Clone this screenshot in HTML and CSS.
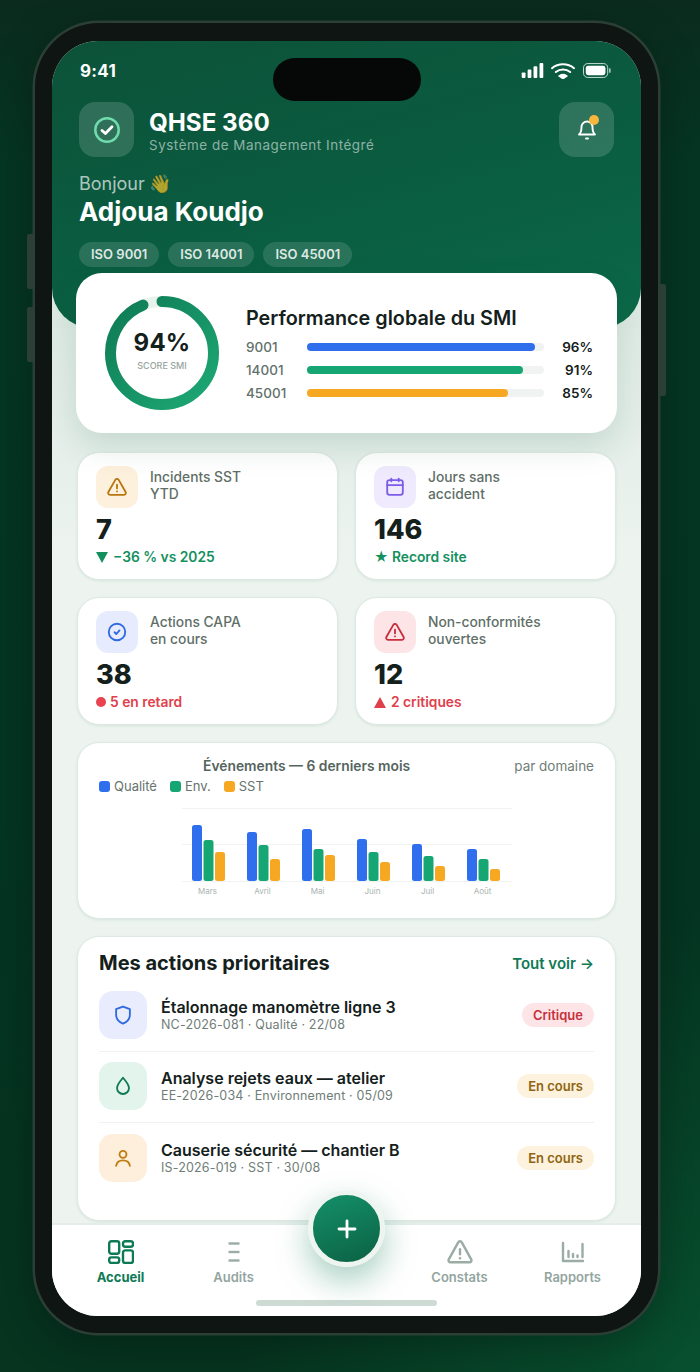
FILE: index.html
```html
<!DOCTYPE html>
<html lang="fr">
<head>
<meta charset="utf-8">
<title>QHSE 360</title>
<link rel="stylesheet" href="styles.css">
</head>
<body>
<div class="phone">
  <span class="side side-a"></span>
  <span class="side side-b"></span>
  <span class="side side-c"></span>
  <div class="screen">
    <span class="island"></span>
    <header class="hero">
      <div class="status">
        <span class="time">9:41</span>
        <div class="status-icons">
          <svg class="ic-signal" viewBox="0 0 23 16"><rect x="0" y="10" width="4" height="6" rx="1"/><rect x="6.3" y="7" width="4" height="9" rx="1"/><rect x="12.6" y="3.5" width="4" height="12.5" rx="1"/><rect x="19" y="0" width="4" height="16" rx="1"/></svg>
          <svg class="ic-wifi" viewBox="0 0 24 17" fill="none" stroke="#fff" stroke-width="2" stroke-linecap="round"><path d="M1 6.200C7.300.9 16.700.9 23 6.200"/><path d="M4.800 10C9 6.600 15 6.600 19.200 10"/><path d="M8.600 14c2-1.400 4.800-1.400 6.800 0L12 16.400z" fill="#fff"/></svg>
          <svg class="ic-batt" viewBox="0 0 30 16"><rect x=".6" y=".6" width="25.800" height="14.800" rx="4.400" fill="none" stroke="#cfe3da" stroke-width="1"/><rect x="3" y="3" width="21" height="10" rx="2.600" fill="#fff"/><rect x="28" y="5.500" width="1.400" height="5" rx=".7" fill="#cfe3da"/></svg>
        </div>
      </div>
      <div class="brand">
        <div class="glass-btn">
          <svg class="ic-26" viewBox="0 0 26 26" fill="none" stroke-linecap="round" stroke-linejoin="round"><circle cx="13" cy="13" r="11.700" stroke="#6fdcae" stroke-width="2.500"/><path d="M8 13.400l3.400 3.200L18 9.800" stroke="#fff" stroke-width="2.800"/></svg>
        </div>
        <div class="brand-text">
          <div class="brand-name">QHSE 360</div>
          <div class="brand-sub">Système de Management Intégré</div>
        </div>
        <div class="glass-btn bell">
          <svg class="ic-24" viewBox="0 0 24 24" fill="none" stroke="#fff" stroke-width="1.900" stroke-linecap="round" stroke-linejoin="round"><path d="M6.500 9a5.500 5.500 0 0 1 11 0c0 5.500 2.500 7.500 2.500 7.500H4S6.500 14.500 6.500 9"/><path d="M11 20.500h2"/></svg>
          <span class="bell-dot"></span>
        </div>
      </div>
      <div class="hello">Bonjour 👋</div>
      <div class="user">Adjoua Koudjo</div>
      <div class="chips">
        <span class="chip">ISO 9001</span>
        <span class="chip">ISO 14001</span>
        <span class="chip">ISO 45001</span>
      </div>
    </header>

    <main class="content">
      <section class="score">
        <div class="ring">
          <svg viewBox="0 0 114 114" class="ring-svg">
            <defs><linearGradient id="rg" x1="1" y1="0" x2="0" y2="1"><stop offset="0" stop-color="#0e7a55"/><stop offset="1" stop-color="#1ea975"/></linearGradient></defs>
            <circle cx="57" cy="57" r="51.500" fill="none" stroke="#e8f3ee" stroke-width="11"/>
            <circle class="ring-arc" cx="57" cy="57" r="51.500" fill="none" stroke="url(#rg)" stroke-width="11" stroke-linecap="round" pathLength="100" stroke-dasharray="94 100" transform="rotate(-90 57 57)"/>
          </svg>
          <div class="ring-label">
            <div class="ring-val">94%</div>
            <div class="ring-cap">SCORE SMI</div>
          </div>
        </div>
        <div class="perf">
          <h2 class="perf-title">Performance globale du SMI</h2>
          <div class="perf-row"><span class="perf-name">9001</span><span class="track"><span class="fill c-blue" style="width:96%"></span></span><span class="perf-val">96%</span></div>
          <div class="perf-row"><span class="perf-name">14001</span><span class="track"><span class="fill c-green" style="width:91%"></span></span><span class="perf-val">91%</span></div>
          <div class="perf-row"><span class="perf-name">45001</span><span class="track"><span class="fill c-orange" style="width:85%"></span></span><span class="perf-val">85%</span></div>
        </div>
      </section>

      <section class="kpis">
        <article class="card kpi">
          <div class="kpi-top">
            <div class="kpi-icon bg-orange"><svg class="ic-22" viewBox="0 0 24 24" fill="none" stroke="#b8760f" stroke-width="2" stroke-linecap="round" stroke-linejoin="round"><path d="M10.300 4 2.600 17.500A2 2 0 0 0 4.300 20.500h15.400a2 2 0 0 0 1.700-3L13.700 4a2 2 0 0 0-3.400 0z"/><path d="M12 9.500v4"/><path d="M12 16.800h.01"/></svg></div>
            <div class="kpi-label">Incidents SST<br>YTD</div>
          </div>
          <div class="kpi-val">7</div>
          <div class="kpi-sub t-green"><span class="tri-down"></span>−36 % vs 2025</div>
        </article>
        <article class="card kpi">
          <div class="kpi-top">
            <div class="kpi-icon bg-purple"><svg class="ic-22" viewBox="0 0 24 24" fill="none" stroke="#7c5ce8" stroke-width="2" stroke-linecap="round" stroke-linejoin="round"><rect x="3.500" y="4.500" width="17" height="16" rx="2.500"/><path d="M3.500 10h17"/><path d="M8 2.800v3"/><path d="M16 2.800v3"/></svg></div>
            <div class="kpi-label">Jours sans<br>accident</div>
          </div>
          <div class="kpi-val">146</div>
          <div class="kpi-sub t-green">★ Record site</div>
        </article>
        <article class="card kpi">
          <div class="kpi-top">
            <div class="kpi-icon bg-blue"><svg class="ic-22" viewBox="0 0 24 24" fill="none" stroke="#2f6ae0" stroke-width="2" stroke-linecap="round" stroke-linejoin="round"><circle cx="12" cy="12" r="9"/><path d="M9.300 12.300l2 1.900 3.400-4"/></svg></div>
            <div class="kpi-label">Actions CAPA<br>en cours</div>
          </div>
          <div class="kpi-val">38</div>
          <div class="kpi-sub t-red"><span class="dot-red"></span>5 en retard</div>
        </article>
        <article class="card kpi">
          <div class="kpi-top">
            <div class="kpi-icon bg-red"><svg class="ic-22" viewBox="0 0 24 24" fill="none" stroke="#c5303c" stroke-width="2" stroke-linecap="round" stroke-linejoin="round"><path d="M10.300 4 2.600 17.500A2 2 0 0 0 4.300 20.500h15.400a2 2 0 0 0 1.700-3L13.700 4a2 2 0 0 0-3.400 0z"/><path d="M12 9.500v4"/><path d="M12 16.800h.01"/></svg></div>
            <div class="kpi-label">Non-conformités<br>ouvertes</div>
          </div>
          <div class="kpi-val">12</div>
          <div class="kpi-sub t-red"><span class="tri-up"></span>2 critiques</div>
        </article>
      </section>

      <section class="card chart">
        <div class="chart-head">
          <div class="chart-left">
            <div class="chart-title">Événements — 6 derniers mois</div>
            <div class="legend">
              <span class="leg"><i class="sw c-blue"></i>Qualité</span>
              <span class="leg"><i class="sw c-green"></i>Env.</span>
              <span class="leg"><i class="sw c-orange"></i>SST</span>
            </div>
          </div>
          <div class="chart-side">par domaine</div>
        </div>
        <svg class="chart-svg" viewBox="0 0 330 96">
          <g stroke="#eff3f1" stroke-width="1"><path d="M0 .5h330"/><path d="M0 36.500h330"/><path d="M0 73.500h330"/></g>
          <g fill="#2f6fed">
            <rect x="10" y="17" width="10" height="56" rx="2.500"/><rect x="65" y="24" width="10" height="49" rx="2.500"/><rect x="120" y="21" width="10" height="52" rx="2.500"/><rect x="175" y="31" width="10" height="42" rx="2.500"/><rect x="230" y="36" width="10" height="37" rx="2.500"/><rect x="285" y="41" width="10" height="32" rx="2.500"/>
          </g>
          <g fill="#16a673">
            <rect x="21.500" y="32" width="10" height="41" rx="2.500"/><rect x="76.500" y="37" width="10" height="36" rx="2.500"/><rect x="131.500" y="41" width="10" height="32" rx="2.500"/><rect x="186.500" y="44" width="10" height="29" rx="2.500"/><rect x="241.500" y="48" width="10" height="25" rx="2.500"/><rect x="296.500" y="51" width="10" height="22" rx="2.500"/>
          </g>
          <g fill="#f7a823">
            <rect x="33" y="44" width="10" height="29" rx="2.500"/><rect x="88" y="51" width="10" height="22" rx="2.500"/><rect x="143" y="47" width="10" height="26" rx="2.500"/><rect x="198" y="54" width="10" height="19" rx="2.500"/><rect x="253" y="58" width="10" height="15" rx="2.500"/><rect x="308" y="61" width="10" height="12" rx="2.500"/>
          </g>
          <g class="chart-months" text-anchor="middle">
            <text x="25.500" y="86">Mars</text><text x="80.500" y="86">Avril</text><text x="135.500" y="86">Mai</text><text x="190.500" y="86">Juin</text><text x="245.500" y="86">Juil</text><text x="300.500" y="86">Août</text>
          </g>
        </svg>
      </section>

      <section class="card actions">
        <div class="actions-head">
          <h2 class="actions-title">Mes actions prioritaires</h2>
          <span class="see-all">Tout voir →</span>
        </div>
        <div class="action">
          <div class="action-icon bg-indigo"><svg class="ic-22" viewBox="0 0 24 24" fill="none" stroke="#2f6ae0" stroke-width="2" stroke-linecap="round" stroke-linejoin="round"><path d="M12 2.800 19.500 5.600v6c0 4.600-3 8-7.500 9.800-4.500-1.800-7.500-5.200-7.500-9.800v-6z"/></svg></div>
          <div class="action-text"><div class="action-name">Étalonnage manomètre ligne 3</div><div class="action-meta">NC-2026-081 · Qualité · 22/08</div></div>
          <span class="badge b-red">Critique</span>
        </div>
        <div class="action">
          <div class="action-icon bg-mint"><svg class="ic-22" viewBox="0 0 24 24" fill="none" stroke="#0e7a55" stroke-width="2" stroke-linecap="round" stroke-linejoin="round"><path d="M12 3c3.600 4.200 6.500 7.300 6.500 11.200a6.500 6.500 0 0 1-13 0C5.500 10.300 8.400 7.200 12 3z"/></svg></div>
          <div class="action-text"><div class="action-name">Analyse rejets eaux — atelier</div><div class="action-meta">EE-2026-034 · Environnement · 05/09</div></div>
          <span class="badge b-amber">En cours</span>
        </div>
        <div class="action">
          <div class="action-icon bg-peach"><svg class="ic-22" viewBox="0 0 24 24" fill="none" stroke="#c07d12" stroke-width="2" stroke-linecap="round" stroke-linejoin="round"><circle cx="12" cy="8" r="3.800"/><path d="M4.500 20.500c.6-4 3.600-6 7.500-6s6.900 2 7.500 6"/></svg></div>
          <div class="action-text"><div class="action-name">Causerie sécurité — chantier B</div><div class="action-meta">IS-2026-019 · SST · 30/08</div></div>
          <span class="badge b-amber">En cours</span>
        </div>
      </section>
    </main>

    <nav class="nav">
      <div class="nav-item active">
        <svg class="nav-ic" viewBox="0 0 26 24" fill="none" stroke="#0e7a55" stroke-width="2.400" stroke-linejoin="round"><rect x="1.200" y="1.200" width="10" height="12.600" rx="2.200"/><rect x="1.200" y="17.400" width="10" height="5.600" rx="2.200"/><rect x="15" y="1.200" width="10" height="5.600" rx="2.200"/><rect x="15" y="10.400" width="10" height="12.600" rx="2.200"/></svg>
        <span>Accueil</span>
      </div>
      <div class="nav-item">
        <svg class="nav-ic" viewBox="0 0 26 24" fill="none" stroke="#9aaca4" stroke-width="2.400"><path d="M7.500 3.500h11"/><path d="M7.500 12h11"/><path d="M7.500 20.500h11"/></svg>
        <span>Audits</span>
      </div>
      <div class="nav-gap"></div>
      <div class="nav-item">
        <svg class="nav-ic" viewBox="0 0 26 24" fill="none" stroke="#9aaca4" stroke-width="2.400" stroke-linecap="round" stroke-linejoin="round"><path d="M11.200 2.400 1.800 19.300a2 2 0 0 0 1.700 3h19a2 2 0 0 0 1.700-3L14.800 2.400a2 2 0 0 0-3.600 0z"/><path d="M13 9.200v5"/><path d="M13 18.200h.01"/></svg>
        <span>Constats</span>
      </div>
      <div class="nav-item">
        <svg class="nav-ic" viewBox="0 0 26 24" fill="none" stroke="#9aaca4" stroke-width="2.400" stroke-linecap="round" stroke-linejoin="round"><path d="M3 3v18h20"/><path d="M8.500 11v6"/><path d="M13 14v3"/><path d="M17.500 15.500V17"/><path d="M22.500 4v13"/></svg>
        <span>Rapports</span>
      </div>
    </nav>
    <button class="fab" type="button" aria-label="Ajouter"><svg viewBox="0 0 24 24" class="ic-24" fill="none" stroke="#fff" stroke-width="2.800" stroke-linecap="round"><path d="M12 4v16"/><path d="M4 12h16"/></svg></button>
    <span class="home"></span>
  </div>
</div>
</body>
</html>
```

FILE: styles.css
```css
* { box-sizing: border-box; margin: 0; padding: 0; }
html, body { width: 700px; height: 1372px; overflow: hidden; }
body {
  padding: 23px 0 0 35px;
  font-family: Inter, "Noto Sans", "Noto Color Emoji", sans-serif;
  color: #14201b;
  background:
    radial-gradient(460px 460px at 100% 100%, #07502f 0%, rgba(7,80,47,0) 100%),
    linear-gradient(180deg, #0a2b1e 0%, #053623 12%, #043522 60%, #06341f 100%);
}
.phone {
  position: relative;
  width: 623px;
  height: 1310px;
  padding: 18px 17px 17px;
  border-radius: 64px;
  background: #0e1513;
  box-shadow: 0 0 0 2.5px #2b3f36, 0 10px 45px rgba(0,0,0,.32);
}
.side { position: absolute; background: #2b3f36; }
.side-a { left: -8px; top: 211px; width: 6px; height: 55px; border-radius: 2px 0 0 2px; }
.side-b { left: -8px; top: 284px; width: 6px; height: 55px; border-radius: 2px 0 0 2px; }
.side-c { right: -8px; top: 261px; width: 6px; height: 112px; border-radius: 0 2px 2px 0; }

.screen {
  position: relative;
  display: flex;
  flex-direction: column;
  width: 589px;
  height: 1275px;
  border-radius: 46px;
  overflow: hidden;
  background: #dde9e3;
}
.island {
  position: absolute;
  z-index: 3;
  left: 221px;
  top: 17px;
  width: 148px;
  height: 43px;
  border-radius: 22px;
  background: #050807;
}

/* Hero */
.hero {
  height: 287px;
  flex: none;
  padding: 0 27px;
  color: #fff;
  border-radius: 0 0 40px 40px;
  background: linear-gradient(165deg, #0c5239 0%, #0a5d41 55%, #0b6848 100%);
}
.status { display: flex; justify-content: space-between; align-items: center; height: 61px; padding: 0 2px 2px 1px; }
.time { font-size: 17px; font-weight: 700; letter-spacing: .3px; }
.status-icons { display: flex; align-items: center; gap: 7px; }
.ic-signal { width: 23px; height: 15px; fill: #fff; }
.ic-wifi { width: 24px; height: 17px; }
.ic-batt { width: 30px; height: 15px; }
.brand { display: flex; align-items: center; }
.glass-btn {
  position: relative;
  flex: none;
  display: flex;
  align-items: center;
  justify-content: center;
  width: 55px;
  height: 55px;
  border-radius: 16px;
  background: rgba(255,255,255,.15);
}
.bell { margin-left: auto; }
.bell-dot {
  position: absolute;
  top: 13px;
  right: 15px;
  width: 10px;
  height: 10px;
  border-radius: 50%;
  background: #f6b73c;
}
.ic-26 { width: 26px; height: 26px; }
.ic-24 { width: 24px; height: 24px; }
.ic-22 { width: 22px; height: 22px; }
.brand-text { margin-left: 15px; }
.brand-name { font-size: 24.2px; font-weight: 700; line-height: 30px; }
.brand-sub { font-size: 13.4px; line-height: 14px; letter-spacing: .55px; color: rgba(255,255,255,.55); }
.hello { margin-top: 16px; font-size: 18px; line-height: 22px; color: rgba(255,255,255,.68); }
.user { margin-top: 2px; font-size: 26px; font-weight: 700; line-height: 30px; }
.chips { display: flex; gap: 9px; margin-top: 15px; }
.chip {
  height: 25px;
  padding: 0 12px;
  border-radius: 13px;
  font-size: 13px;
  font-weight: 600;
  line-height: 25px;
  color: rgba(255,255,255,.86);
  background: rgba(255,255,255,.13);
}

/* Content */
.content {
  flex: 1;
  min-height: 0;
  padding: 0 25px;
  background: linear-gradient(180deg, #dfeae5 0, #e9f1ed 170px, #edf4f0 220px);
}
.score {
  position: relative;
  display: flex;
  align-items: center;
  width: 541px;
  height: 160px;
  margin: -55px 0 19px -1px;
  padding: 0 24px 0 29px;
  border-radius: 26px;
  background: #fff;
  box-shadow: 0 14px 32px rgba(14,90,60,.14);
}
.ring { position: relative; flex: none; width: 114px; height: 114px; }
.ring-svg { display: block; width: 114px; height: 114px; }
.ring-label { position: absolute; inset: 0; display: flex; flex-direction: column; align-items: center; justify-content: center; padding-bottom: 6px; }
.ring-val { font-size: 24px; font-weight: 700; line-height: 30px; letter-spacing: .2px; }
.ring-cap { margin-top: 2px; font-size: 9px; font-weight: 500; line-height: 12px; color: #98a5a0; }
.perf { flex: 1; margin-left: 27px; }
.perf-title { margin-bottom: 5px; padding-top: 3px; font-size: 19.8px; font-weight: 600; line-height: 26px; }
.perf-row { display: flex; align-items: center; height: 23px; }
.perf-name { width: 61px; font-size: 13.5px; font-weight: 500; color: #63716b; }
.track { flex: none; width: 237px; height: 8px; border-radius: 4px; background: #f0f3f2; }
.fill { display: block; height: 100%; border-radius: 4px; }
.perf-val { flex: 1; text-align: right; font-size: 13.5px; font-weight: 600; }
.c-blue { background: #2f6fed; }
.c-green { background: #16a673; }
.c-orange { background: #f7a823; }

.card {
  border: 1px solid #dfe9e4;
  border-radius: 22px;
  background: #fff;
  box-shadow: 0 1px 3px rgba(14,90,60,.1);
}
.kpis { display: grid; grid-template-columns: 261px 261px; gap: 17px 17px; }
.kpi { height: 128px; padding: 13px 18px 0; }
.kpi-top { display: flex; gap: 12px; }
.kpi-icon { display: flex; align-items: center; justify-content: center; flex: none; width: 42px; height: 42px; border-radius: 12px; }
.kpi-label { padding-top: 3px; font-size: 13.8px; font-weight: 500; line-height: 17px; color: #5f6f68; }
.kpi-val { margin-top: 7px; font-size: 27px; font-weight: 800; line-height: 30px; }
.kpi-sub { display: flex; align-items: center; margin-top: 2px; font-size: 13.8px; font-weight: 600; line-height: 20px; }
.t-green { color: #14905f; }
.t-red { color: #e0404c; }
.tri-down { width: 0; height: 0; margin-right: 5px; border: 6px solid transparent; border-top: 11px solid #14905f; border-bottom: 0; }
.tri-up { width: 0; height: 0; margin-right: 5px; border: 6.5px solid transparent; border-bottom: 11px solid #e0404c; border-top: 0; }
.dot-red { width: 10px; height: 10px; margin-right: 4px; border-radius: 50%; background: #e8434f; }
.bg-orange { background: #fdf0dc; }
.bg-purple { background: #efeafd; }
.bg-blue { background: #e6ecfe; }
.bg-red { background: #fde4e6; }
.bg-indigo { background: #e8ecfd; }
.bg-mint { background: #e3f4ec; }
.bg-peach { background: #fdefdb; }

.chart { height: 177px; margin-top: 17px; padding: 13px 21px 0; }
.chart-head { display: flex; align-items: flex-start; }
.chart-left { flex: 1; }
.chart-title { text-align: center; font-size: 13.85px; font-weight: 600; line-height: 20px; color: #55655e; }
.chart-side { font-size: 13.5px; line-height: 20px; color: #6f7d77; }
.legend { display: flex; gap: 13px; }
.leg { display: flex; align-items: center; gap: 4px; font-size: 13px; line-height: 20px; color: #66746e; }
.sw { width: 11px; height: 11px; border-radius: 3px; }
.chart-svg { display: block; width: 330px; height: 96px; margin: 12px auto 0; }
.chart-months { font-family: Inter, sans-serif; font-size: 8px; fill: #a9b3af; }

.actions { height: 285px; margin-top: 17px; padding: 12px 21px 0; }
.actions-head { display: flex; align-items: center; justify-content: space-between; height: 28px; margin-bottom: 4px; }
.actions-title { font-size: 20px; font-weight: 700; line-height: 28px; }
.see-all { font-size: 15px; font-weight: 600; color: #0e7a55; }
.action { display: flex; align-items: center; height: 71px; padding-bottom: 2px; border-bottom: 1px solid #eef3f0; }
.action:last-child { border-bottom: 0; }
.action-icon { display: flex; align-items: center; justify-content: center; flex: none; width: 48px; height: 48px; border-radius: 14px; }
.action-text { flex: 1; margin-left: 14px; }
.action-name { font-size: 16px; font-weight: 600; line-height: 20px; }
.action-meta { font-size: 12.5px; line-height: 16px; letter-spacing: .17px; color: #6f7d77; }
.badge { flex: none; height: 24px; padding: 0 11px; border-radius: 12px; font-size: 13px; font-weight: 600; line-height: 24px; }
.b-red { color: #c5303c; background: #fde4e6; }
.b-amber { color: #8f6412; background: #fdf2dd; }

/* Nav */
.nav {
  flex: none;
  display: flex;
  height: 93px;
  padding: 15px 12px 0 12px;
  border-top: 2px solid #e4ede9;
  background: #fff;
}
.nav-item { display: flex; flex-direction: column; align-items: center; width: 113px; font-size: 13px; font-weight: 600; line-height: 18px; color: #93a5a0; }
.nav-item.active { color: #0e7a55; font-weight: 700; }
.nav-gap { flex: none; width: 113px; }
.nav-ic { width: 26px; height: 24px; margin-bottom: 4px; }
.fab {
  position: absolute;
  z-index: 4;
  left: 256px;
  top: 1149px;
  display: flex;
  align-items: center;
  justify-content: center;
  width: 77px;
  height: 77px;
  border: 5px solid #eef5f1;
  border-radius: 50%;
  background: linear-gradient(160deg, #149068, #0b6144);
  box-shadow: 0 14px 32px rgba(14,122,85,.36);
}
.home {
  position: absolute;
  left: 204px;
  top: 1259px;
  width: 181px;
  height: 6px;
  border-radius: 3px;
  background: #cedbd5;
}
```
